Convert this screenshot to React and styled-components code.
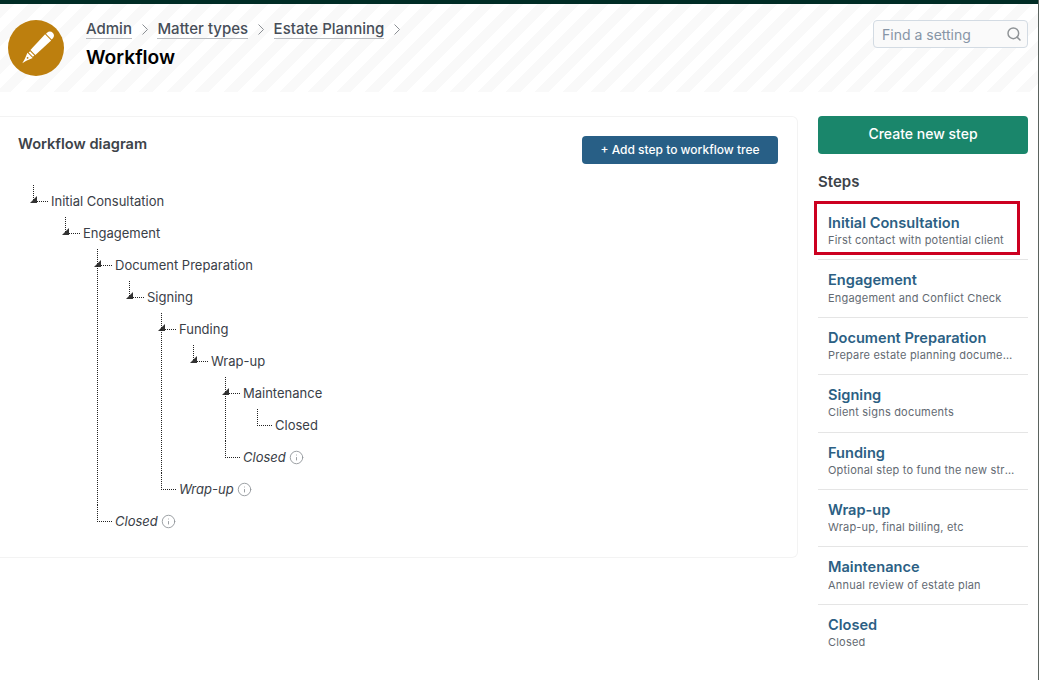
import React from 'react';
import styled, { createGlobalStyle } from 'styled-components';
import { Search, Info } from 'lucide-react';

const GlobalStyle = createGlobalStyle`
  html, body {
    margin: 0;
    padding: 0;
    background: #fff;
    font-family: 'Inter', 'Liberation Sans', sans-serif;
    overflow: hidden;
  }
  * { box-sizing: border-box; }
`;

const steps = [
  { title: 'Initial Consultation', text: 'First contact with potential client', active: true },
  { title: 'Engagement', text: 'Engagement and Conflict Check' },
  { title: 'Document Preparation', text: 'Prepare estate planning documents' },
  { title: 'Signing', text: 'Client signs documents' },
  { title: 'Funding', text: 'Optional step to fund the new structure' },
  { title: 'Wrap-up', text: 'Wrap-up, final billing, etc' },
  { title: 'Maintenance', text: 'Annual review of estate plan' },
  { title: 'Closed', text: 'Closed' },
];

const tree = [
  { name: 'Initial Consultation', children: [
    { name: 'Engagement', children: [
      { name: 'Document Preparation', children: [
        { name: 'Signing', children: [
          { name: 'Funding', children: [
            { name: 'Wrap-up', children: [
              { name: 'Maintenance', children: [{ name: 'Closed' }] },
              { name: 'Closed', link: true },
            ] },
          ] },
          { name: 'Wrap-up', link: true },
        ] },
      ] },
      { name: 'Closed', link: true },
    ] },
  ] },
];

const PenIcon = () => (
  <svg width="44" height="44" viewBox="-22 -22 44 44" fill="#fff">
    <g transform="translate(1.5 0) rotate(45)">
      <path d="M-4 -16 V-17.500 C-4 -20 -2.300 -21.500 0 -21.500 C2.300 -21.500 4 -20 4 -17.500 V-16 Z" />
      <path d="M-4.300 -15 H4.300 L3.500 6.500 H-3.500 Z" />
      <rect x="-3" y="7.500" width="6" height="2" />
      <path d="M-3.700 10.500 H3.700 L1.200 17 L0 21.500 L-1.200 17 Z" />
      <circle cx="0" cy="14" r="0.900" fill="#bd7f0e" />
    </g>
  </svg>
);

const CrumbChevron = () => (
  <ChevronSvg width="6" height="11" viewBox="0 0 6 11">
    <path d="M0.500 0.500 L5.500 5.500 L0.500 10.500" fill="none" stroke="#8b8f94" strokeWidth="1" />
  </ChevronSvg>
);

const TreeNodes = ({ nodes }) => (
  <TreeList>
    {nodes.map((node, i) => (
      <TreeItem key={i} $more={i < nodes.length - 1}>
        <Elbow />
        {node.children && <Arrow />}
        <NodeRow>
          <NodeLabel $link={node.link}>{node.name}</NodeLabel>
          {node.link && <Info size={15} color="#8f9498" strokeWidth={1.4} />}
        </NodeRow>
        {node.children && <TreeNodes nodes={node.children} />}
      </TreeItem>
    ))}
  </TreeList>
);

export default function App() {
  return (
    <Page>
      <GlobalStyle />
      <TopBar />
      <Header>
        <Badge><PenIcon /></Badge>
        <HeaderText>
          <Crumbs>
            <Crumb>Admin</Crumb><CrumbChevron />
            <Crumb>Matter types</Crumb><CrumbChevron />
            <Crumb>Estate Planning</Crumb><CrumbChevron />
          </Crumbs>
          <PageTitle>Workflow</PageTitle>
        </HeaderText>
        <SearchBox>
          <SearchText>Find a setting</SearchText>
          <Search size={16} color="#8f9396" strokeWidth={2.2} />
        </SearchBox>
      </Header>
      <Content>
        <Card>
          <CardHead>
            <CardTitle>Workflow diagram</CardTitle>
            <AddButton>+ Add step to workflow tree</AddButton>
          </CardHead>
          <TreeWrap><TreeNodes nodes={tree} /></TreeWrap>
        </Card>
        <Side>
          <CreateButton>Create new step</CreateButton>
          <SideTitle>Steps</SideTitle>
          <StepList>
            {steps.map((s) => (
              <Step key={s.title} $active={s.active}>
                <StepTitle>{s.title}</StepTitle>
                <StepText>{s.text}</StepText>
              </Step>
            ))}
          </StepList>
        </Side>
      </Content>
    </Page>
  );
}

const Page = styled.div`
  width: 1039px;
  height: 680px;
  overflow: hidden;
  border-right: 1px solid #5b635f;
`;

const TopBar = styled.div`
  height: 4px;
  background: #002c25;
`;

const Header = styled.header`
  height: 88px;
  display: flex;
  align-items: flex-start;
  padding: 16px 10px 0 8px;
  background: repeating-linear-gradient(135deg, #f9f9f9 0 10px, #fff 10px 20px);
`;

const Badge = styled.div`
  width: 56px;
  height: 56px;
  border-radius: 50%;
  background: #bd7f0e;
  display: flex;
  align-items: center;
  justify-content: center;
  flex-shrink: 0;
`;

const HeaderText = styled.div`
  margin-left: 22px;
  flex: 1;
`;

const Crumbs = styled.div`
  display: flex;
  align-items: center;
  height: 19px;
`;

const Crumb = styled.a`
  font-size: 15px;
  font-weight: 500;
  line-height: 18px;
  color: #474e58;
  border-bottom: 1px solid #b9bcc0;
`;

const ChevronSvg = styled.svg`
  margin: 0 9.5px 0 10px;
  flex-shrink: 0;
`;

const PageTitle = styled.h1`
  margin: 5px 0 0;
  font-size: 19.2px;
  line-height: 26px;
  font-weight: 600;
  color: #000;
`;

const SearchBox = styled.div`
  width: 155px;
  height: 28px;
  padding: 0 5px 0 8px;
  display: flex;
  align-items: center;
  justify-content: space-between;
  border: 1px solid #d3dbe3;
  border-radius: 4px;
  background: #fafafa;
`;

const SearchText = styled.span`
  font-size: 14px;
  color: #8795a6;
`;

const Content = styled.main`
  display: flex;
  align-items: flex-start;
  gap: 20px;
  padding: 24px 10px 0 0;
`;

const Card = styled.section`
  width: 798px;
  height: 442px;
  padding: 18px 19px 0 18px;
  border: 1px solid #f3f3f3;
  border-left: none;
  border-radius: 0 6px 6px 0;
`;

const CardHead = styled.div`
  display: flex;
  align-items: flex-start;
  justify-content: space-between;
`;

const CardTitle = styled.h2`
  margin: 0;
  font-size: 14.6px;
  line-height: 18px;
  font-weight: 600;
  color: #3d4349;
`;

const AddButton = styled.button`
  width: 196px;
  height: 28px;
  margin-top: 1px;
  padding: 0 0 2px;
  border: none;
  border-radius: 4px;
  background: #285f86;
  color: #fff;
  font: 500 12px 'Inter', sans-serif;
`;

const TreeWrap = styled.div`
  margin: 21px 0 0 15px;
`;

const TreeList = styled.ul`
  list-style: none;
  margin: 0;
  padding: 0;
  & & {
    margin-left: 14px;
  }
`;

const TreeItem = styled.li`
  position: relative;
  padding-left: 18px;
  &::after {
    content: '';
    display: ${(p) => (p.$more ? 'block' : 'none')};
    position: absolute;
    left: 0;
    top: 16px;
    bottom: 0;
    border-left: 1px dotted #222;
  }
`;

const Elbow = styled.span`
  position: absolute;
  left: 0;
  top: 0;
  width: 15px;
  height: 17px;
  border-left: 1px dotted #222;
  border-bottom: 1px dotted #222;
`;

const Arrow = styled.span`
  position: absolute;
  left: -3px;
  top: 11px;
  width: 7px;
  height: 7px;
  background: #333;
  clip-path: polygon(100% 0, 100% 100%, 0 100%);
`;

const NodeRow = styled.div`
  height: 32px;
  display: flex;
  align-items: center;
  gap: 3px;
`;

const NodeLabel = styled.span`
  font-size: 13px;
  color: #3a4047;
  font-style: ${(p) => (p.$link ? 'italic' : 'normal')};
`;

const Side = styled.aside`
  width: 210px;
`;

const CreateButton = styled.button`
  width: 100%;
  height: 38px;
  padding: 0 0 3px;
  border: none;
  border-radius: 4px;
  background: #1a866b;
  color: #fff;
  font: 500 14px 'Inter', sans-serif;
`;

const SideTitle = styled.h3`
  margin: 18px 0 0;
  font-size: 15px;
  line-height: 20px;
  font-weight: 600;
  color: #3d4349;
`;

const StepList = styled.div`
  margin-top: 10px;
`;

const Step = styled.div`
  position: relative;
  height: 57.4px;
  padding: 10px 10px 0;
  border-bottom: 1px solid #e5e5e5;
  &:last-child { border-bottom: none; }
  ${(p) => p.$active && `
    height: 58.4px;
    padding-top: 11px;
    &::before {
      content: '';
      position: absolute;
      left: -4px;
      right: 8px;
      top: -1px;
      bottom: 4px;
      border: 3px solid #cc0020;
    }
  `}
`;

const StepTitle = styled.div`
  font-size: 14.6px;
  line-height: 20px;
  font-weight: 600;
  color: #2c5f84;
`;

const StepText = styled.div`
  margin-top: 0.3px;
  font-size: 11px;
  line-height: 15px;
  letter-spacing: 0.2px;
  color: #636a72;
  white-space: nowrap;
  overflow: hidden;
  text-overflow: ellipsis;
`;
